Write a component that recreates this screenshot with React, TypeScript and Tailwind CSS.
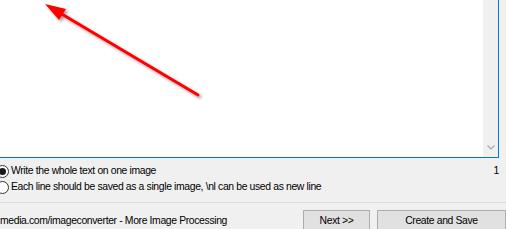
import React from "react";

function Radio({ checked }: { checked?: boolean }) {
  return (
    <span className="ml-[-4px] flex h-[13px] w-[13px] shrink-0 items-center justify-center rounded-full border border-[#333333] bg-white">
      {checked ? <span className="h-[7px] w-[7px] rounded-full bg-[#1a1a1a]" /> : null}
    </span>
  );
}

export default function App() {
  return (
    <div
      className="h-[229px] w-[506px] overflow-hidden bg-[#f0f0f0] text-[10.4px] leading-none tracking-[-0.36px] text-black"
      style={{ fontFamily: '"Liberation Sans", Arial, sans-serif' }}
    >
      <div className="flex h-[158px] w-[499px] border-r border-b border-[#0078d7] bg-white">
        <div className="relative flex-1">
          <svg className="absolute inset-0 h-full w-full" viewBox="0 0 483 157">
            <defs>
              <filter id="sh" x="-20%" y="-20%" width="140%" height="140%">
                <feDropShadow dx="2" dy="2" stdDeviation="1.5" floodColor="#000000" floodOpacity="0.4" />
              </filter>
            </defs>
            <g filter="url(#sh)">
              <line x1="198" y1="95" x2="60" y2="13" stroke="#ff0000" strokeWidth="3" strokeLinecap="round" />
              <polygon points="45,4 59,20 66,9" fill="#ff0000" />
            </g>
          </svg>
        </div>
        <div className="flex w-[15px] flex-col items-center justify-end bg-[#f0f0f0] pb-[7px]">
          <svg width="8" height="5" viewBox="0 0 8 5">
            <path d="M0.5 0.5 L4 4 L7.5 0.5" fill="none" stroke="#a6a6a6" strokeWidth="1.2" />
          </svg>
        </div>
      </div>

      <div className="pt-[5px]">
        <div className="flex h-[16px] items-center pr-[7px]">
          <Radio checked />
          <span className="ml-[2px]">Write the whole text on one image</span>
          <span className="ml-auto">1</span>
        </div>
        <div className="flex h-[16px] items-center">
          <Radio />
          <span className="ml-[2px]">Each line should be saved as a single image, \nl can be used as new line</span>
        </div>
      </div>

      <div className="mt-[7px] border-t border-[#dcdcdc]" />

      <div className="mt-[7px] flex h-[23px] items-center">
        <span className="flex-1 whitespace-nowrap">media.com/imageconverter - More Image Processing</span>
        <button className="flex h-[23px] w-[67px] items-center justify-center border border-[#adadad] bg-[#e1e1e1]">
          Next &gt;&gt;
        </button>
        <button className="ml-[7px] flex h-[23px] w-[129px] items-center justify-center border border-[#adadad] bg-[#e1e1e1]">
          Create and Save
        </button>
      </div>
    </div>
  );
}
